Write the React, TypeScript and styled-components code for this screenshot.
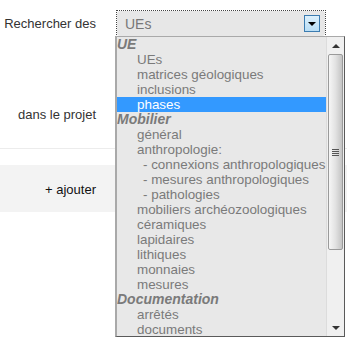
import React from 'react';
import styled, { createGlobalStyle } from 'styled-components';

const GlobalStyle = createGlobalStyle`
  html, body {
    margin: 0;
    padding: 0;
    background: #ffffff;
  }
  body {
    font-family: "Liberation Sans", Arial, sans-serif;
    font-size: 13px;
    color: #333333;
  }
`;

type OptionItem = {
  label: string;
  kind: 'group' | 'option' | 'sub';
  selected?: boolean;
};

const items: OptionItem[] = [
  { label: 'UE', kind: 'group' },
  { label: 'UEs', kind: 'option' },
  { label: 'matrices géologiques', kind: 'option' },
  { label: 'inclusions', kind: 'option' },
  { label: 'phases', kind: 'option', selected: true },
  { label: 'Mobilier', kind: 'group' },
  { label: 'général', kind: 'option' },
  { label: 'anthropologie:', kind: 'option' },
  { label: '- connexions anthropologiques', kind: 'sub' },
  { label: '- mesures anthropologiques', kind: 'sub' },
  { label: '- pathologies', kind: 'sub' },
  { label: 'mobiliers archéozoologiques', kind: 'option' },
  { label: 'céramiques', kind: 'option' },
  { label: 'lapidaires', kind: 'option' },
  { label: 'lithiques', kind: 'option' },
  { label: 'monnaies', kind: 'option' },
  { label: 'mesures', kind: 'option' },
  { label: 'Documentation', kind: 'group' },
  { label: 'arrêtés', kind: 'option' },
  { label: 'documents', kind: 'option' },
];

const Form = styled.div`
  display: flex;
  flex-direction: column;
  width: 347px;
  min-height: 341px;
`;

const Row = styled.div<{ $height: number; $top: number; $band?: boolean; $rule?: boolean }>`
  display: flex;
  align-items: flex-start;
  height: ${p => p.$height}px;
  padding-top: ${p => p.$top}px;
  box-sizing: border-box;
  background: ${p => (p.$band ? '#f3f3f3' : 'transparent')};
  border-bottom: ${p => (p.$rule ? '1px solid #ececec' : 'none')};
`;

const Spacer = styled.div`
  height: 16px;
`;

const Label = styled.div<{ $dark?: boolean; $offset?: number }>`
  width: 116px;
  flex: none;
  box-sizing: border-box;
  padding-right: 20px;
  padding-top: ${p => p.$offset ?? 0}px;
  text-align: right;
  line-height: 16px;
  color: ${p => (p.$dark ? '#111111' : '#333333')};
`;

const SelectWrap = styled.div`
  position: relative;
  width: 210px;
  height: 27px;
  box-sizing: border-box;
  outline: 1px dotted #444444;
  outline-offset: -1px;
  padding: 1px;
`;

const SelectBox = styled.div`
  display: flex;
  align-items: center;
  justify-content: space-between;
  height: 100%;
  box-sizing: border-box;
  padding: 0 5px 0 8px;
  background: #e7e7e7;
  border-radius: 3px;
  color: #777777;
  font-size: 14px;
`;

const ArrowButton = styled.div`
  width: 16px;
  height: 17px;
  box-sizing: border-box;
  border: 1px solid #3c7cb0;
  background: linear-gradient(#dcf0fc, #b9def5);
  display: flex;
  align-items: center;
  justify-content: center;
`;

const Triangle = styled.div<{ $up?: boolean; $color?: string }>`
  width: 0;
  height: 0;
  border-left: 4px solid transparent;
  border-right: 4px solid transparent;
  ${p =>
    p.$up
      ? `border-bottom: 4px solid ${p.$color ?? '#000'};`
      : `border-top: 4px solid ${p.$color ?? '#000'};`}
`;

const Dropdown = styled.div`
  position: absolute;
  top: 26px;
  left: -1px;
  width: 230px;
  height: 301px;
  box-sizing: border-box;
  display: flex;
  background: #e8e8e8;
  border: 1px solid #5a5a5a;
  border-left: 2px solid #a9a9a9;
  border-top: 1px solid #a9a9a9;
  z-index: 5;
`;

const List = styled.div`
  flex: 1;
  display: flex;
  flex-direction: column;
  overflow: hidden;
`;

const Item = styled.div<{ $kind: OptionItem['kind']; $selected?: boolean }>`
  height: 15px;
  flex: none;
  line-height: 15px;
  white-space: nowrap;
  font-size: ${p => (p.$kind === 'group' ? '14px' : '13.4px')};
  font-weight: ${p => (p.$kind === 'group' ? 'bold' : 'normal')};
  font-style: ${p => (p.$kind === 'group' ? 'italic' : 'normal')};
  padding-left: ${p => (p.$kind === 'group' ? 0 : p.$kind === 'sub' ? 26 : 20)}px;
  color: ${p => (p.$selected ? '#ffffff' : '#7a7a7a')};
  background: ${p => (p.$selected ? '#3399ff' : 'transparent')};
`;

const ScrollBar = styled.div`
  width: 17px;
  flex: none;
  display: flex;
  flex-direction: column;
  align-items: center;
  background: #f0f0f0;
  border-left: 1px solid #dcdcdc;
`;

const ScrollButton = styled.div`
  height: 17px;
  width: 100%;
  display: flex;
  align-items: center;
  justify-content: center;
  flex: none;
`;

const Thumb = styled.div`
  width: 15px;
  height: 196px;
  flex: none;
  box-sizing: border-box;
  border: 1px solid #9a9a9a;
  border-radius: 2px;
  background: linear-gradient(to right, #f6f6f6, #e2e2e2 50%, #c4c4c4);
  display: flex;
  align-items: center;
  justify-content: center;
`;

const Grip = styled.div`
  width: 7px;
  height: 7px;
  background: repeating-linear-gradient(#555555 0 1px, transparent 1px 2px);
`;

const Track = styled.div`
  flex: 1;
`;

const App: React.FC = () => {
  return (
    <>
      <GlobalStyle />
      <Form>
        <Row $height={47} $top={10}>
          <Label $offset={6}>Rechercher des</Label>
          <SelectWrap>
            <SelectBox>
              <span>UEs</span>
              <ArrowButton>
                <Triangle />
              </ArrowButton>
            </SelectBox>
            <Dropdown>
              <List>
                {items.map((item, i) => (
                  <Item key={i} $kind={item.kind} $selected={item.selected}>
                    {item.label}
                  </Item>
                ))}
              </List>
              <ScrollBar>
                <ScrollButton>
                  <Triangle $up $color="#333" />
                </ScrollButton>
                <Thumb>
                  <Grip />
                </Thumb>
                <Track />
                <ScrollButton>
                  <Triangle $color="#333" />
                </ScrollButton>
              </ScrollBar>
            </Dropdown>
          </SelectWrap>
        </Row>
        <Row $height={102} $top={60} $rule>
          <Label>dans le projet</Label>
        </Row>
        <Spacer />
        <Row $height={47} $top={17} $band>
          <Label $dark>+ ajouter</Label>
        </Row>
      </Form>
    </>
  );
};

export default App;
